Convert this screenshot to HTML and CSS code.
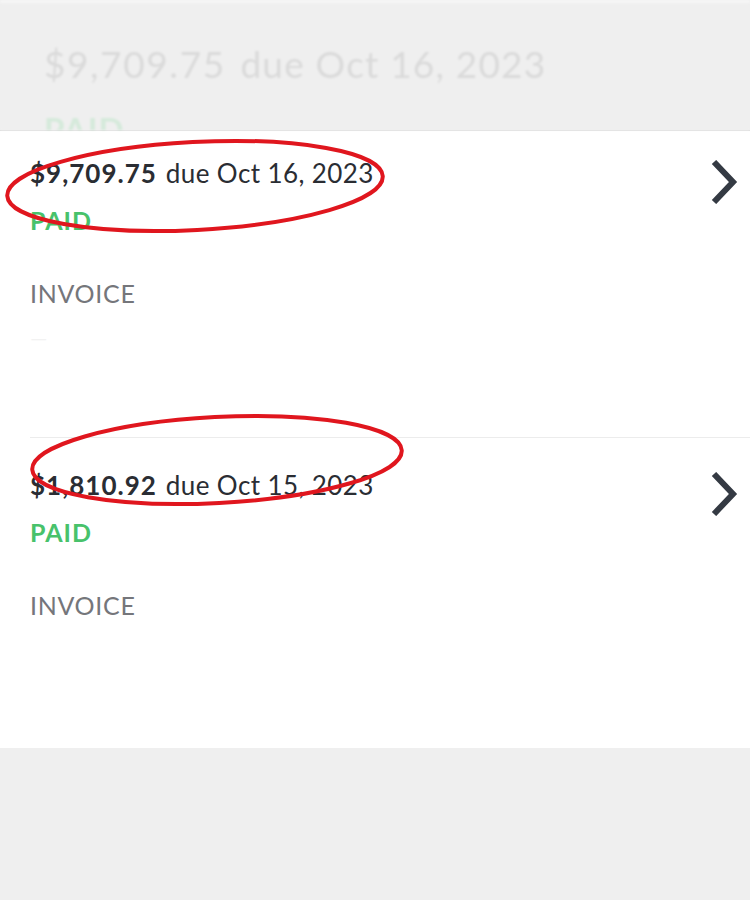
FILE: index.html
```html
<!DOCTYPE html>
<html>
<head>
<meta charset="utf-8">
<link rel="stylesheet" href="styles.css">
</head>
<body>
<div class="page">
  <div class="header">
    <div class="ghost-line"><span class="ghost-amount">$9,709.75</span> <span>due Oct 16, 2023</span></div>
    <div class="ghost-paid">PAID</div>
  </div>
  <div class="list">
    <div class="item">
      <div class="item-body">
        <div class="amount-line"><span class="amount">$9,709.75</span><span class="due">due Oct 16, 2023</span></div>
        <div class="status">PAID</div>
        <div class="kind">INVOICE</div>
        <div class="faint">&mdash;</div>
      </div>
      <svg class="chevron" width="30" height="44" viewBox="0 0 30 44"><path d="M4 2 L23 22 L4 42" fill="none" stroke="#343a43" stroke-width="6"/></svg>
    </div>
    <div class="item">
      <div class="item-body">
        <div class="amount-line"><span class="amount">$1,810.92</span><span class="due">due Oct 15, 2023</span></div>
        <div class="status">PAID</div>
        <div class="kind">INVOICE</div>
      </div>
      <svg class="chevron" width="30" height="44" viewBox="0 0 30 44"><path d="M4 2 L23 22 L4 42" fill="none" stroke="#343a43" stroke-width="6"/></svg>
    </div>
  </div>
  <div class="footer"></div>
  <svg class="marks" width="750" height="900" viewBox="0 0 750 900">
    <ellipse cx="195" cy="186" rx="188" ry="44" transform="rotate(-3 195 186)" fill="none" stroke="#e0161e" stroke-width="4"/>
    <ellipse cx="217" cy="460" rx="185" ry="43" transform="rotate(-3 217 460)" fill="none" stroke="#e0161e" stroke-width="4"/>
  </svg>
</div>
</body>
</html>
```
FILE: styles.css
```css
html, body {
  margin: 0;
  padding: 0;
  background: #efefef;
}
body {
  font-family: "Lato", "Liberation Sans", sans-serif;
  width: 750px;
  height: 900px;
  overflow: hidden;
}
.page {
  position: relative;
  width: 750px;
  height: 900px;
  display: flex;
  flex-direction: column;
}
.header {
  height: 130px;
  overflow: hidden;
  background: #efefef;
  border-top: 3px solid #f6f6f6;
  box-sizing: border-box;
  padding: 37px 0 0 44px;
  filter: blur(1px);
}
.ghost-line {
  font-size: 37px;
  line-height: 48px;
  color: #dadada;
  white-space: nowrap;
  letter-spacing: 1.2px;
}
.ghost-amount {
  margin-right: 4px;
  letter-spacing: 1.6px;
}
.ghost-paid {
  margin-top: 21px;
  font-size: 33px;
  font-weight: 700;
  line-height: 40px;
  color: #d5eadb;
  letter-spacing: 1px;
}
.list {
  background: #ffffff;
  border-top: 1px solid #dedede;
}
.item {
  display: flex;
  align-items: flex-start;
  margin-left: 30px;
  padding: 32px 10px 128px 0;
  border-bottom: 1px solid #ececec;
}
.item:first-child {
  padding-top: 27px;
  padding-bottom: 129px;
}
.item:last-child {
  border-bottom: none;
  padding-bottom: 128px;
}
.item-body {
  flex: 1;
  position: relative;
}
.amount-line {
  font-size: 26px;
  line-height: 30px;
  color: #2a2d33;
  white-space: nowrap;
}
.amount {
  font-weight: 700;
  margin-right: 9px;
  letter-spacing: 1px;
}
.due {
  font-weight: 400;
  letter-spacing: 0.4px;
}
.status {
  margin-top: 17px;
  font-size: 25px;
  line-height: 30px;
  font-weight: 700;
  color: #48c26b;
  letter-spacing: 1px;
}
.kind {
  margin-top: 43px;
  font-size: 25px;
  line-height: 30px;
  color: #75767b;
  letter-spacing: 0.7px;
}
.faint {
  position: absolute;
  left: 0;
  top: 165px;
  font-size: 22px;
  line-height: 30px;
  color: #f2f2f2;
}
.chevron {
  margin-top: 2px;
  flex: none;
}
.footer {
  flex: 1;
  background: #efefef;
}
.marks {
  position: absolute;
  left: 0;
  top: 0;
  pointer-events: none;
}
```
